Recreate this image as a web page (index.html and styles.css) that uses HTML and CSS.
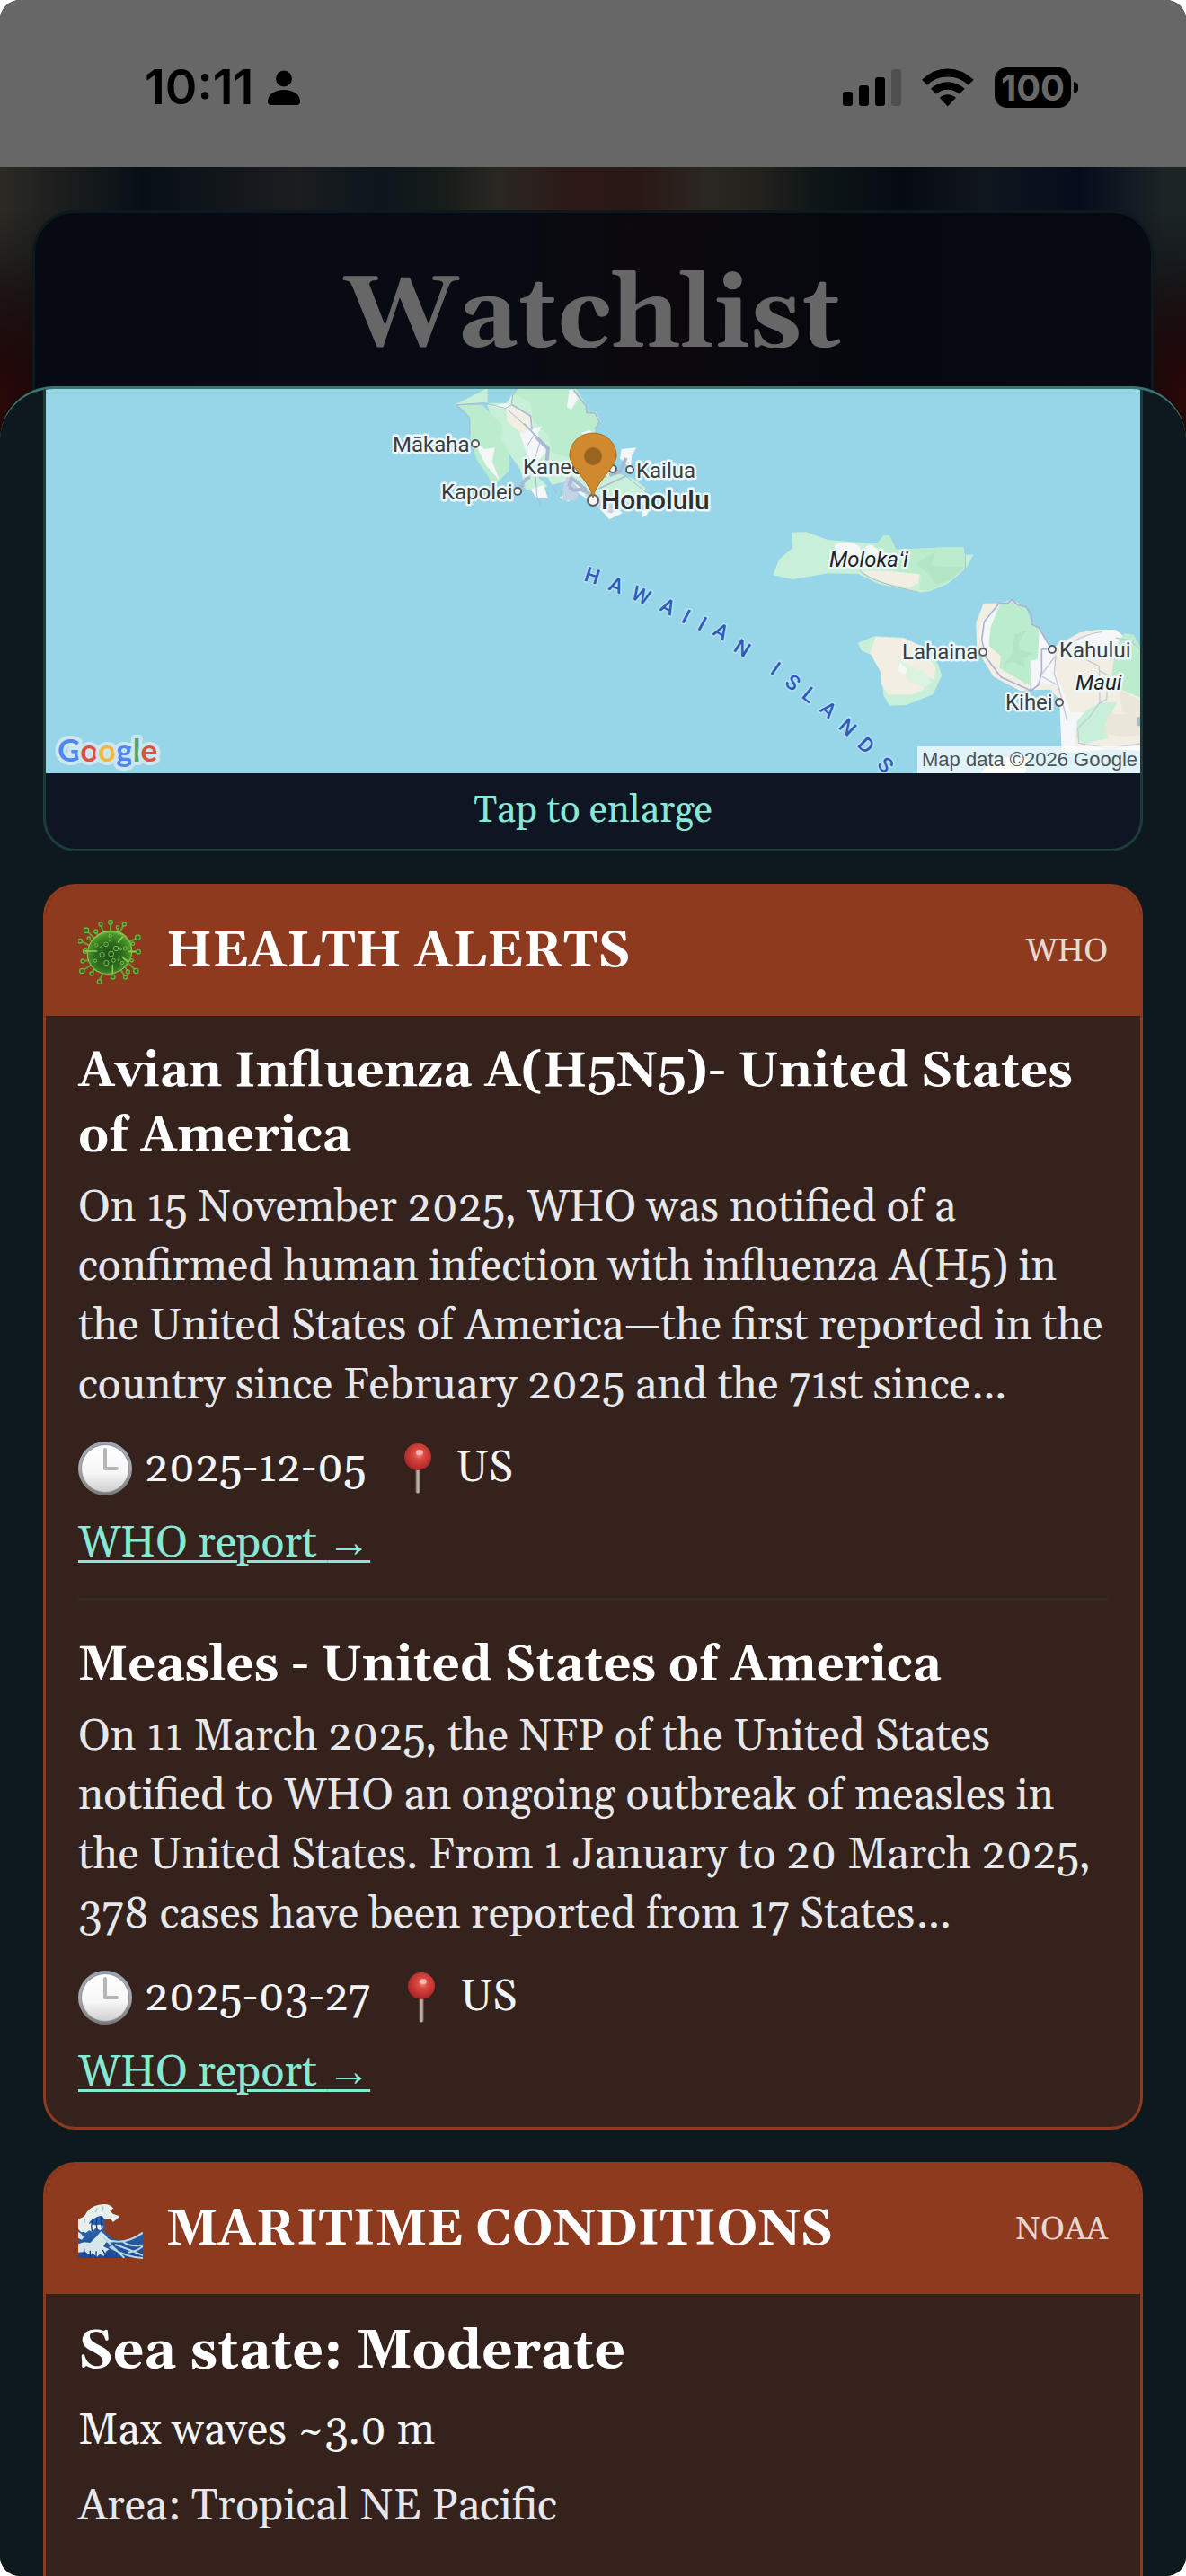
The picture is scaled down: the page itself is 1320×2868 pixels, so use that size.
FILE: index.html
```html
<!DOCTYPE html>
<html lang="en">
<head>
<meta charset="utf-8">
<meta name="viewport" content="width=device-width, initial-scale=1">
<title>Watchlist</title>
<link rel="stylesheet" href="styles.css">
</head>
<body>
<svg class="defs" width="0" height="0" aria-hidden="true">
  <defs>
    <radialGradient id="virus-body" cx="45%" cy="55%" r="58%">
      <stop offset="0" stop-color="#1d4f1b"/><stop offset=".55" stop-color="#2f6d20"/><stop offset=".88" stop-color="#4f9a2c"/><stop offset="1" stop-color="#a5d465"/>
    </radialGradient>
    <linearGradient id="clock-rim" x1="0" y1="0" x2="0" y2="1">
      <stop offset="0" stop-color="#9aa5b8"/><stop offset=".5" stop-color="#a9a9ab"/><stop offset="1" stop-color="#777"/>
    </linearGradient>
    <linearGradient id="clock-face" x1="0" y1="0" x2="0" y2="1">
      <stop offset="0" stop-color="#fff"/><stop offset=".6" stop-color="#f6f6f6"/><stop offset="1" stop-color="#cfcfcf"/>
    </linearGradient>
    <radialGradient id="pin-head" cx="55%" cy="40%" r="60%">
      <stop offset="0" stop-color="#f39a8c"/><stop offset=".3" stop-color="#dd4a42"/><stop offset="1" stop-color="#a92425"/>
    </radialGradient>
    <linearGradient id="pin-needle" x1="0" y1="0" x2="1" y2="0">
      <stop offset="0" stop-color="#6b5f58"/><stop offset=".5" stop-color="#cdbfb4"/><stop offset="1" stop-color="#7c6c62"/>
    </linearGradient>
    <linearGradient id="wave-sea" x1="0" y1="0" x2="0" y2="1">
      <stop offset="0" stop-color="#356fae"/><stop offset="1" stop-color="#1c4a9b"/>
    </linearGradient>
    <symbol id="clock" viewBox="0 0 60 60">
      <circle cx="30" cy="30" r="30" fill="url(#clock-rim)"/>
      <circle cx="30" cy="30" r="27" fill="#8f939a"/>
      <circle cx="30" cy="30" r="26" fill="url(#clock-face)"/>
      <path d="M30 9v21h13" fill="none" stroke="#b4b6ba" stroke-width="4" stroke-linecap="round" stroke-linejoin="round"/>
    </symbol>
    <symbol id="pushpin" viewBox="0 0 30 56">
      <path d="M12.500 27h5v27q-2.500 3-5 0z" fill="url(#pin-needle)"/>
      <circle cx="15" cy="15" r="15" fill="url(#pin-head)"/>
      <ellipse cx="17" cy="10" rx="4" ry="3" fill="#ffd0c6" opacity=".7"/>
    </symbol>
  </defs>
</svg>

<div class="screen">
  <div class="statusbar">
    <div class="statusbar-left">
      <span class="time">10:11</span>
      <svg class="person" viewBox="0 0 36 39" aria-hidden="true"><circle cx="18" cy="9.500" r="9"/><path d="M0 35C0 27 8 22 18 22s18 5 18 13q0 4-4 4H4q-4 0-4-4z"/></svg>
    </div>
    <div class="statusbar-right">
      <svg class="signal" viewBox="0 0 65 41" aria-hidden="true"><rect y="25" width="11" height="16" rx="3"/><rect x="18" y="18" width="11" height="23" rx="3"/><rect x="36" y="9" width="11" height="32" rx="3"/><rect x="54" width="11" height="41" rx="3" fill="#505050"/></svg>
      <svg class="wifi" viewBox="374 44 174 128" aria-hidden="true"><path d="M374 82Q412 45 460 45t87 37l-18 18q-28-28-69-28t-68 28zM404 112q24-23 56-23t57 23l-18 18q-17-15-39-15t-38 15zM433 142q12-11 27-11t28 11l-28 29z"/></svg>
      <span class="battery">100</span>
    </div>
  </div>

  <header class="backdrop">
    <div class="title-card"><h1>Watchlist</h1></div>
  </header>

  <main class="sheet">
    <section class="map-card">
      <svg class="map" viewBox="0 0 1218 428" role="img" aria-label="Map of Honolulu and the Hawaiian Islands">
        <rect width="1218" height="428" fill="#97d6e8"/>
        <!-- Oahu -->
        <g transform="translate(349 -13) scale(.33333)">
          <path fill="#c8f0d8" d="M318 92 410 86l80 0 40-50h180l12 0 38 60 0 20 30 0 16 32-20 30 0 90 60-30 8 80 60 20 40 30 12 50-50 20-45-45-90 40-45-50-20-15-50-15-60 18-50 5-20-70-50-70-30-60-28-80 0-60z"/>
          <path fill="#bcecce" d="M330 94 410 92l70 70-10 40 30 50 0 60-50 50-60-90-20-60 0-80zM535 36h175l46 62 2 20 28 2 14 30-18 24-2 100-60 0-76-20-14-60-50-50-10-60-60-30z"/>
          <path fill="#f5f6f8" d="M715 42l15 30-22 36-15-8 8-58zM510 45 500 108l-60-12 60-10zM535 185l75-22-15 25 30 60-40 45-25-35zM378 205l40 35 35-5-10 45 25 65-45-50zM875 240l50-5-15 25-5 45-35-35zM690 335l30 10 50 40 80 50 30 18-45 22-45-50-70-45-20 35-30-10-5-40zM570 375l45-15 15 45-35 0zM740 185l30-8 15 10-25 15zM945 445l25-5-10 20-15 8z"/>
          <path fill="#f3eee3" d="M490 110l20-15 65 35 5 30-35 30-50-40z"/>
          <path fill="#c6d3e6" d="M675 360l20-30 40 45-10 35-45 2zM750 390l60 20 60 25-30 20-60-30z"/>
          <g fill="none" stroke="#a9b9d6" stroke-linejoin="round">
            <path stroke-width="3" d="M528 38 512 60l-4 32-20 12-70-18-95 6 44 46 2 55M495 108l60 55 50 45-20 70 8 120 12 30M585 190l-25 40-2 75M890 330l75 60"/>
            <path stroke-width="5" d="M715 42l42 54 2 22 28 2 15 30-16 24M510 92l62 38 4 45M550 155l40 42M600 335l40 25 20 28M800 372l90-42"/>
            <path stroke-width="12" d="M590 200l40 38-4 40M535 378q10-35 35-45M700 365l8-28 45 35-38 5-15-12M740 375l60 30M890 270l-20 45-35 12"/>
          </g>
          <path fill="#97d6e8" d="M600 330l30 5 28 55 4-35 22-5-10 50-22-5z"/>
        </g>
        <!-- Molokai, Lanai, Maui -->
        <g transform="translate(789 107) scale(.33333)">
          <path fill="#c8f0d8" d="M123 158l50-1 70 26 185 15 2-30h20l22 47 168-7h58l2 25h30l-26 47-60 50-60 25-38 4-130-28-70-34-100-2-120 20-65-14 20-52 45-38z"/>
          <path fill="#bcecce" d="M430 168h20l22 47 168-7h58l2 70-60 50-60 25-30-3 5-50-100-15-80-50z"/>
          <path fill="#b3e5c4" d="M540 262l65-40-15 45 40 5 70 0-45 45-50 15-25-35z"/>
          <path fill="#f5f6f8" d="M265 200q50-20 85 5l20 75-70-5zM370 205l20-5 40 30 10 20-60-5z"/>
          <path fill="#f3eee3" d="M350 285l100 3 100 10-4 30-30 15-90-18-40-18z"/>
          <path fill="none" stroke="#a9b9c6" stroke-width="3" d="M350 285q40 40 198 73M703 235v50"/>
          <path fill="#c8f0d8" d="M345 527l55-22 100 5 110 85 15 40-30 65-90 35-55 2-20-35-10-100-20-30-45-20z"/>
          <path fill="#f3eee3" d="M405 507l95 5 55 25 50 75-4 40-20-10-30 5 15 35-40 18-80 0-24-35-2-40-35-65z"/>
          <path fill="#dcf3e2" d="M475 580l100 50 15 30-20 16-50-16-40-60z"/>
          <path fill="#f5f6f8" d="M485 592l25 25-10 15-20-10z"/>
          <path fill="#f3eee3" d="M815 395l45-12 45 25 20 60 30 20 30 60 100-55 60-10 60 0 82 65v340l-100-5-130 10-15-20-10-140-45-50-60 2-5-25-5 25-30 3-90-48-55-90-3-90 25-65z"/>
          <path fill="#f5f6f8" d="M750 510l5-50 45-50 8 25-25 105-5 25-20-30zM945 475l50 75 20 120-60-10-35 25-2-110 25 5zM1050 525l100-40 55 0 20 15-20 40-100 0zM1015 650l40 110 45 0-30 60 0 70-45 0-5-115z"/>
          <path fill="#bcecce" d="M820 395l40-8 42 20 18 40 30 40-5 95-25 5 2 85-105-60 5-40-40-35 5-60 20-50zM1205 540l30-45 30 5 22 40v170l-70-30-25-50z"/>
          <path fill="#b3e5c4" d="M862 560l5-60 40-15-25 40 5 25 45 15-35 15 5 30-40-20-30 10z"/>
          <path fill="#c8f0d8" d="M1075 790l35-40 50-25 50 0-40 80 10 40-80 20-25-20z"/>
          <path fill="#eae6da" d="M1180 765l107 0v70l-60 5-60-10zM1215 680l72 40v50l-60-10z"/>
          <path fill="#a8bcc4" d="M1275 775h12v30h-8z"/>
          <path fill="none" stroke="#a9b3d3" stroke-width="5" stroke-linejoin="round" d="M990 548l-42-72-22-10-2-35-20-25-25-5-20-18-15 12-28 0-50 62-8 60 15 60 50 65 100 45 25-20 10-40v-78l28-2"/>
          <path fill="none" stroke="#c3cadb" stroke-width="4" stroke-linejoin="round" d="M960 630l45-60-5 60 15 45 28 113M960 640l50 28M1050 530q60-35 110-40M1100 580l50 25 2 120-30 45-43 42 3 50 100 18 105-16M1150 620l30 15-5 80-25 15M1205 510l50 10 32 30"/>
          <path fill="#f1fbe9" d="M755 963q30-45 90-55l75 10-20 45z"/>
        </g>
        <g class="map-dots">
          <circle cx="478" cy="61" r="4"/><circle cx="525" cy="114" r="4"/><circle cx="631" cy="89" r="4"/><circle cx="650" cy="90" r="4"/>
          <circle cx="609" cy="124" r="6"/><circle cx="1043" cy="293" r="4"/><circle cx="1120" cy="290" r="4"/><circle cx="1128" cy="349" r="4"/>
        </g>
        <g class="map-towns">
          <text x="386" y="70">Mākaha</text><text x="531" y="95">Kaneohe</text><text x="440" y="123">Kapolei</text><text x="657" y="99">Kailua</text>
          <text class="map-city" x="618" y="134">Honolulu</text>
          <text class="map-island" x="872" y="198">Molokaʻi</text><text x="953" y="301">Lahaina</text><text x="1128" y="299">Kahului</text>
          <text class="map-island" x="1146" y="335">Maui</text><text x="1068" y="357">Kihei</text>
        </g>
        <text class="map-sea" x="598 625 650 682 706 724 741 764" y="213 223 233 246 259 267 273 291" rotate="18 21 24 27 28 29 30 32">HAWAIIAN</text>
        <text class="map-sea" x="805 821 840 860 881 902 924" y="316 329 343 358 377 397 419" rotate="35 37 39 41 43 45 47">ISLANDS</text>
        <path fill="#d18930" stroke="#a56a1c" stroke-width="1" d="M609 122c-2-18-26-34-26-48a26 25 0 0 1 52 0c0 14-24 30-26 48z"/>
        <circle cx="609" cy="75" r="10" fill="#9a6520"/>
        <rect x="970" y="398" width="248" height="30" fill="#fff" opacity=".7"/>
        <text class="map-credit" x="975" y="420">Map data ©2026 Google</text>
        <text class="map-logo" x="13" y="415"><tspan fill="#4f86f2">G</tspan><tspan fill="#dd5144">o</tspan><tspan fill="#f0b83c">o</tspan><tspan fill="#4f86f2">g</tspan><tspan fill="#54a35f">l</tspan><tspan fill="#dd5144">e</tspan></text>
      </svg>
      <button class="enlarge" type="button">Tap to enlarge</button>
    </section>

    <section class="card">
      <div class="card-head">
        <svg class="card-icon" viewBox="40 36 216 216" aria-hidden="true">
          <g fill="none" stroke="#5da232" stroke-width="6" stroke-linecap="round">
            <path d="M68 72 98 102M98 76l14 20M115 52l10 28M148 44v40M193 51l-18 36M172 62l-4 20M239 96l-38 18M240 143h-34M233 206l-46-46M205 209l-12-22M198 227l-20-30M155 226v-38M111 242l14-36M85 215l14-20M53 207l40-26M56 174l24-4M64 141h34M46 106l32 16M75 98l14 12M222 116l-16 4M218 172l-18-6"/>
          </g>
          <ellipse cx="145" cy="145" rx="76" ry="70" fill="url(#virus-body)" stroke="#8cc94f" stroke-width="3" transform="rotate(-35 145 145)"/>
          <g fill="#2c6b2a" stroke="#6fb33b" stroke-width="4">
            <circle cx="67" cy="71" r="8"/><circle cx="99" cy="75" r="6"/><circle cx="115" cy="51" r="6"/><circle cx="148" cy="44" r="7"/><circle cx="194" cy="51" r="6"/><circle cx="172" cy="61" r="5"/><circle cx="239" cy="95" r="8"/><circle cx="241" cy="143" r="7"/><circle cx="233" cy="207" r="8"/><circle cx="206" cy="210" r="6"/><circle cx="198" cy="228" r="6"/><circle cx="156" cy="227" r="7"/><circle cx="111" cy="243" r="7"/><circle cx="85" cy="216" r="6"/><circle cx="53" cy="207" r="8"/><circle cx="55" cy="174" r="6"/><circle cx="63" cy="141" r="7"/><circle cx="46" cy="107" r="7"/><circle cx="75" cy="98" r="5"/><circle cx="223" cy="116" r="5"/><circle cx="219" cy="172" r="5"/>
          </g>
          <g fill="none" stroke="#79b843" stroke-width="3">
            <circle cx="133" cy="118" r="7"/><circle cx="166" cy="132" r="8"/><circle cx="120" cy="153" r="8"/><circle cx="150" cy="150" r="9"/><circle cx="134" cy="180" r="8"/><circle cx="158" cy="172" r="6"/><circle cx="101" cy="121" r="5"/><circle cx="147" cy="90" r="5"/><circle cx="197" cy="132" r="6"/><circle cx="97" cy="173" r="5"/><circle cx="187" cy="180" r="5"/><circle cx="145" cy="105" r="3"/><circle cx="116" cy="128" r="3"/><circle cx="183" cy="134" r="3"/><circle cx="175" cy="170" r="3"/>
          </g>
          <path d="M173 111l16-18M62 141h40M207 142h24M187 160l18 16M155 188v26" fill="none" stroke="#8ad047" stroke-width="5" stroke-linecap="round"/>
        </svg>
        <h2>HEALTH ALERTS</h2>
        <span class="source">WHO</span>
      </div>
      <div class="card-body">
        <article class="item">
          <h3>Avian Influenza A(H5N5)- United States of America</h3>
          <p class="summary">On 15 November 2025, WHO was notified of a confirmed human infection with influenza A(H5) in the United States of America—the first reported in the country since February 2025 and the 71st since…</p>
          <p class="meta"><svg class="clock" aria-hidden="true"><use href="#clock"/></svg><time datetime="2025-12-05">2025-12-05</time><svg class="pushpin" aria-hidden="true"><use href="#pushpin"/></svg><span>US</span></p>
          <a href="#who-avian">WHO report <span class="arrow">→</span></a>
        </article>
        <article class="item">
          <h3>Measles - United States of America</h3>
          <p class="summary">On 11 March 2025, the NFP of the United States notified to WHO an ongoing outbreak of measles in the United States. From 1 January to 20 March 2025, 378 cases have been reported from 17 States…</p>
          <p class="meta"><svg class="clock" aria-hidden="true"><use href="#clock"/></svg><time datetime="2025-03-27">2025-03-27</time><svg class="pushpin" aria-hidden="true"><use href="#pushpin"/></svg><span>US</span></p>
          <a href="#who-measles">WHO report <span class="arrow">→</span></a>
        </article>
      </div>
    </section>

    <section class="card card-last">
      <div class="card-head">
        <svg class="card-icon" viewBox="36 36 216 216" aria-hidden="true">
          <path fill="url(#wave-sea)" d="M36 237V108l36-12 50-6q4 26-2 42 6 26 34 42 50 14 98-24v87z"/>
          <path fill="#2a5fae" d="M72 98l50-22q-2 30 4 56l-20 22-60-6z"/>
          <path fill="#e4efee" d="M36 140v-34q20-2 30-24 20-24 54-25 22-2 34 14l-12 8 10 10 22 8-6 8-8 6-8 6-8-12-20 2-8-12q-22 2-30 14-12 2-14 14l10-4 8 8 20-2 10 6-10 14-16-8-10 12-12-4-10 8-8-4-8 2z"/>
          <path fill="#d5e7e9" d="M36 190l20-6 20 2 22-22 14-16q14 10 24 24 10 8 30 8-20 8-36 4l-10 14 20 10-10 6-8 16-14-6-10 10-14-14-12 6-12-10-24 2z"/>
          <path fill="#dfeced" d="M36 150l10 6 8 12-6 8-12-6z"/>
          <path d="M150 180q50 10 102-28M140 200q60 36 112 37M160 192q40 14 92 36M186 182q20 18 66 12M204 218q28-4 48-20M120 168q26 26 70 68" fill="none" stroke="#b8d7df" stroke-width="6"/>
          <path d="M84 108q-6 20-2 40M98 104q-4 20 2 42M112 100q0 20 4 40M56 206v28M76 212v24M96 214v22M118 210l14 26" fill="none" stroke="#143a80" stroke-width="4"/>
          <path d="M60 106q-4 8-2 14M120 66l-4 16M100 70l-6 14" fill="none" stroke="#a9c4c6" stroke-width="4"/>
        </svg>
        <h2>MARITIME CONDITIONS</h2>
        <span class="source">NOAA</span>
      </div>
      <div class="card-body">
        <h3 class="state">Sea state: Moderate</h3>
        <p class="fact">Max waves ~3.0 m</p>
        <p class="fact fact-area">Area: Tropical NE Pacific</p>
      </div>
    </section>
  </main>
</div>
</body>
</html>
```
FILE: styles.css
```css
* { box-sizing: border-box; }
body { margin: 0; background: #fff; font-family: Gelasio, Georgia, "Liberation Serif", serif; font-size: 48px; line-height: 66px; color: #f3f4f6; }
h1, h2, h3, p { margin: 0; }
svg { display: block; flex: none; }
.defs { position: absolute; }

.screen { display: flex; flex-direction: column; height: 100vh; overflow: hidden; border-radius: 22px; background: #0e191e; }

.statusbar { flex: none; display: flex; justify-content: space-between; align-items: center; height: 186px; padding: 8px 128px 0 161px; background: #676767; color: #000; font-family: Inter, "Liberation Sans", sans-serif; }
.statusbar-left, .statusbar-right { display: flex; align-items: center; }
.statusbar-left { gap: 16px; }
.statusbar-right { gap: 23px; }
.time { font-size: 54px; font-weight: 600; }
.person { width: 36px; height: 39px; }
.signal { width: 65px; height: 41px; }
.wifi { width: 58px; height: 43px; }
.battery { position: relative; width: 85px; height: 45px; border-radius: 14px; background: #000; color: #676767; font-size: 40px; font-weight: 700; line-height: 45px; text-align: center; }
.battery::after { content: ""; position: absolute; left: 88px; top: 16px; width: 5px; height: 13px; border-radius: 0 5px 5px 0; background: #000; }

.backdrop { flex: none; display: flex; height: 304px; padding: 48px 36px 0;
  background:
    radial-gradient(ellipse 100px 160px at 0% 85%, #2a0808, transparent),
    radial-gradient(ellipse 100px 160px at 100% 85%, #2a0808, transparent),
    linear-gradient(to bottom, transparent 15%, #08090c 75%),
    linear-gradient(90deg, #2c2a24 0, #070f16 12%, #1b1d20 25%, #0c161c 32%, #151c19 37%, #2a2722 42%, #2c1917 48%, #2a1816 54%, #2b2822 60%, #23211c 64%, #0e1618 69%, #060b12 76%, #10161d 83%, #060c1c 91%, #1c2426 98%); }
.title-card { flex: 1; border: 3px solid #0c191d; border-radius: 48px 48px 0 0; background: linear-gradient(to right, #070a12, #080b13 40%, #0c090e 55%, #06080f 75%, #080a12); text-align: center; }
h1 { padding-top: 44px; color: #676767; font-size: 112px; font-weight: 700; line-height: 144px; }

.sheet { position: relative; flex: 1; min-height: 0; margin-top: -60px; padding: 0 48px; overflow: hidden; display: flex; flex-direction: column; gap: 36px; border-top: 3px solid #3a756f; border-radius: 60px 60px 0 0; background: #0e191e; }

.map-card { flex: none; overflow: hidden; border: 3px solid #1e3b3b; border-top: 0; border-radius: 0 0 36px 36px; background: #0f1623; }
.map { width: 100%; height: auto; font-family: Roboto, "Liberation Sans", sans-serif; }
.map text { paint-order: stroke; stroke: #edf7f8; stroke-width: 5px; stroke-linejoin: round; }
.map-towns { fill: #3a3d42; font-size: 24px; }
.map-towns .map-city { fill: #2c2f33; font-size: 30px; font-weight: 500; }
.map-towns .map-island { fill: #1f2225; font-style: italic; }
.map .map-sea { fill: #2f5cba; font-size: 23px; font-weight: 500; stroke: #b5e2f2; stroke-width: 3px; }
.map .map-credit { fill: #4c5357; font-family: "Liberation Sans", sans-serif; font-size: 22px; stroke: none; }
.map .map-logo { font-family: Lato, sans-serif; font-size: 35px; font-weight: 700; stroke: #cde7f0; stroke-width: 8px; }
.map-dots { fill: #f4f6f7; stroke: #5b5f63; stroke-width: 2px; }
.enlarge { display: block; width: 100%; padding: 12px 0; border: 0; background: none; color: #87e8d6; font: inherit; font-size: 42px; line-height: 60px; }

.card { flex: none; overflow: hidden; border: 3px solid #8e3a1f; border-radius: 36px; background: #35221c; }
.card-last { flex: 1 0 auto; border-bottom: 0; border-radius: 36px 36px 0 0; }
.card-head { display: flex; align-items: center; gap: 26px; height: 144px; padding: 2px 36px 0; background: #8e3a1f; }
.card-icon { width: 72px; height: 72px; }
h2 { flex: 1; color: #fff; font-size: 56px; font-weight: 700; line-height: 72px; }
.source { color: #e8d8d2; font-size: 36px; line-height: 48px; }
.card-body { padding: 26px 36px 27px; }
.item + .item { margin-top: 27px; padding-top: 36px; border-top: 3px solid #302c29; }
h3 { color: #fff; font-size: 54px; font-weight: 700; line-height: 72px; }
.summary { margin-top: 11px; color: #e5e7eb; }
.meta { display: flex; align-items: center; margin-top: 26px; }
.clock { width: 60px; height: 60px; margin-right: 14px; }
.pushpin { width: 30px; height: 56px; margin: 0 28px 0 42px; }
.item a { display: block; width: fit-content; margin-top: 18px; color: #87e8d6; text-decoration-thickness: 3px; text-underline-offset: 4px; }
.arrow { font-family: "Liberation Serif", serif; line-height: 1; }
.state { font-size: 60px; line-height: 78px; }
.fact { margin-top: 16px; }
.fact-area { margin-top: 18px; color: #e5e7eb; }
```
